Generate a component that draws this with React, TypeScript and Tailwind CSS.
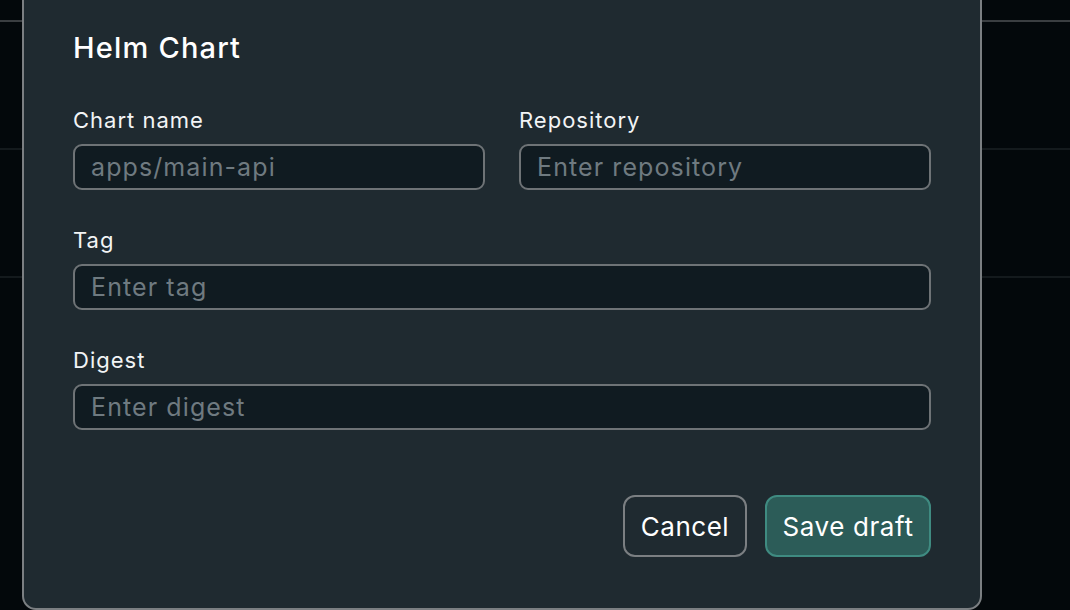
import React from 'react';

const Field = ({ label, placeholder }: { label: string; placeholder: string }) => (
  <label className="flex flex-col">
    <span className="text-[22px] leading-[30px] tracking-[1px] text-[#f2f4f5]">{label}</span>
    <input
      placeholder={placeholder}
      className="mt-[9px] h-[46px] w-full rounded-[9px] border-2 border-[#6e7376] bg-[#101b21] px-[16px] text-[25px] tracking-[1.1px] text-[#e5e7e8] outline-none placeholder:text-[#6f7a80]"
    />
  </label>
);

export default function App() {
  return (
    <div
      className="relative h-[610px] w-[1070px] overflow-hidden bg-[#03080b]"
      style={{ fontFamily: 'Inter, "Noto Sans", sans-serif' }}
    >
      {/* background table rows */}
      <div className="flex flex-col">
        <div className="h-[22px] border-b-2 border-[#3a3e41]" />
        <div className="h-[128px] border-b-2 border-[#141a1d]" />
        <div className="h-[128px] border-b-2 border-[#141a1d]" />
      </div>

      {/* dialog */}
      <div className="absolute left-[22px] top-[-30px] h-[640px] w-[960px] rounded-[14px] border-2 border-[#7b7f82] bg-[#1f2a30] px-[49px] pt-[56px]">
        <h2 className="text-[29px] font-medium leading-[40px] tracking-[1.2px] text-white">Helm Chart</h2>

        <div className="mt-[37px] grid grid-cols-2 gap-x-[34px]">
          <Field label="Chart name" placeholder="apps/main-api" />
          <Field label="Repository" placeholder="Enter repository" />
        </div>
        <div className="mt-[35px]">
          <Field label="Tag" placeholder="Enter tag" />
        </div>
        <div className="mt-[35px]">
          <Field label="Digest" placeholder="Enter digest" />
        </div>

        <div className="mt-[65px] flex justify-end gap-[18px]">
          <button className="h-[62px] w-[124px] rounded-[12px] border-2 border-[#7b7f82] text-[26px] tracking-[0.5px] text-white">
            Cancel
          </button>
          <button className="h-[62px] w-[166px] rounded-[12px] border-2 border-[#3f8b81] bg-[#2c5c58] text-[26px] tracking-[0.6px] text-white">
            Save draft
          </button>
        </div>
      </div>
    </div>
  );
}
